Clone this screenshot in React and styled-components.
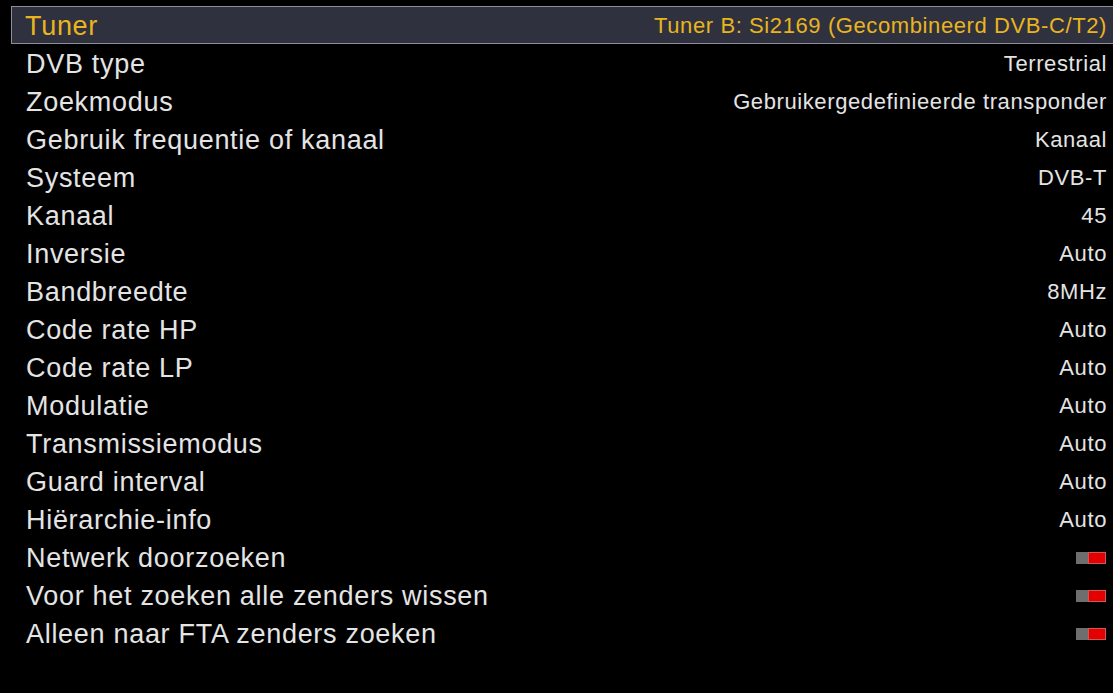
import React from 'react'
import styled, { createGlobalStyle } from 'styled-components'

const Global = createGlobalStyle`
    html, body {
        margin: 0;
        padding: 0;
        background: #000;
    }
    body {
        font-family: "Liberation Sans", Arial, sans-serif;
        width: 1113px;
        height: 693px;
        overflow: hidden;
    }
`

const Screen = styled.div`
    width: 1113px;
    height: 693px;
    background: #000;
    padding: 6px 0 0 11px;
    box-sizing: border-box;
`

const List = styled.div`
    display: flex;
    flex-direction: column;
`

const Row = styled.div`
    height: 38px;
    box-sizing: border-box;
    display: flex;
    align-items: center;
    justify-content: space-between;
    padding: 2px 6px 0 ${p => (p.selected ? '13px' : '14px')};
    background: ${p => (p.selected ? '#30313e' : 'transparent')};
    border: 1px solid ${p => (p.selected ? '#8e8f96' : 'transparent')};
    border-right: none;
`

const Label = styled.span`
    font-size: 27px;
    letter-spacing: 0.7px;
    color: ${p => (p.selected ? '#e9b51f' : '#e4e4e4')};
    white-space: nowrap;
`

const Value = styled.span`
    font-size: 22px;
    letter-spacing: 0.6px;
    color: ${p => (p.selected ? '#e9b51f' : '#e4e4e4')};
    white-space: nowrap;
`

const Toggle = styled.span`
    display: flex;
    width: 30px;
    height: 12px;
    margin: 0 1px 0 0;
`

const Knob = styled.span`
    width: 12px;
    height: 12px;
    background: #6e6e6e;
`

const Track = styled.span`
    flex: 1;
    background: #e40000;
    border: 1px solid #c85a5a;
    box-sizing: border-box;
`

const items = [
    { label: 'Tuner', value: 'Tuner B: Si2169 (Gecombineerd DVB-C/T2)' },
    { label: 'DVB type', value: 'Terrestrial' },
    { label: 'Zoekmodus', value: 'Gebruikergedefinieerde transponder' },
    { label: 'Gebruik frequentie of kanaal', value: 'Kanaal' },
    { label: 'Systeem', value: 'DVB-T' },
    { label: 'Kanaal', value: '45' },
    { label: 'Inversie', value: 'Auto' },
    { label: 'Bandbreedte', value: '8MHz' },
    { label: 'Code rate HP', value: 'Auto' },
    { label: 'Code rate LP', value: 'Auto' },
    { label: 'Modulatie', value: 'Auto' },
    { label: 'Transmissiemodus', value: 'Auto' },
    { label: 'Guard interval', value: 'Auto' },
    { label: 'Hiërarchie-info', value: 'Auto' },
    { label: 'Netwerk doorzoeken', toggle: true },
    { label: 'Voor het zoeken alle zenders wissen', toggle: true },
    { label: 'Alleen naar FTA zenders zoeken', toggle: true },
]

const App = () => {
    return (
        <Screen>
            <Global />
            <List>
                {items.map((item, index) => {
                    const selected = index === 0
                    return (
                        <Row key={item.label} selected={selected}>
                            <Label selected={selected}>{item.label}</Label>
                            {item.toggle ? (
                                <Toggle>
                                    <Knob />
                                    <Track />
                                </Toggle>
                            ) : (
                                <Value selected={selected}>{item.value}</Value>
                            )}
                        </Row>
                    )
                })}
            </List>
        </Screen>
    )
}

export default App
